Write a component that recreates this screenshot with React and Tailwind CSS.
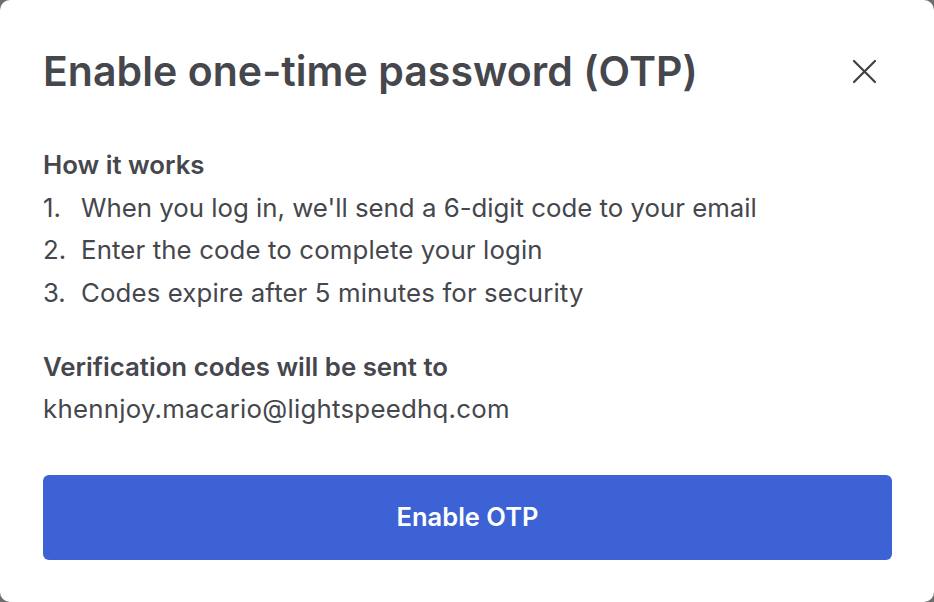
export default function App() {
  return (
    <div className="w-[934px] h-[602px] bg-[#6e6e6e] overflow-hidden" style={{ fontFamily: 'Inter, "Noto Sans", sans-serif' }}>
      <div className="w-full h-full bg-white rounded-[10px] pl-[43px] pr-[42px] text-[#45474d] flex flex-col">
        <div className="flex items-center justify-between h-[60px] mt-[41px]">
          <h1 className="text-[41px] font-semibold tracking-[0.05px] leading-none">Enable one-time password (OTP)</h1>
          <button className="w-[40px] h-[40px] flex items-center justify-center mr-[8px]">
            <svg width="25" height="25" viewBox="0 0 25 25" fill="none" stroke="#3f4147" strokeWidth="2.2" strokeLinecap="round">
              <path d="M2 2L23 23M23 2L2 23" />
            </svg>
          </button>
        </div>
        <div className="mt-[43px] text-[25.8px] leading-[42.5px]">
          <div className="font-semibold">How it works</div>
          <ol>
            <li className="flex"><span className="w-[38px]">1.</span><span>When you log in, we'll send a 6-digit code to your email</span></li>
            <li className="flex"><span className="w-[38px]">2.</span><span className="tracking-[0.12px]">Enter the code to complete your login</span></li>
            <li className="flex"><span className="w-[38px]">3.</span><span className="tracking-[0.12px]">Codes expire after 5 minutes for security</span></li>
          </ol>
        </div>
        <div className="mt-[32px] text-[25.8px] leading-[42px]">
          <div className="font-semibold">Verification codes will be sent to</div>
          <div className="tracking-[0.25px]">khennjoy.macario@lightspeedhq.com</div>
        </div>
        <button className="mt-[45px] h-[85px] w-[849px] bg-[#3c62d6] rounded-[6px] text-white text-[25.5px] font-semibold">Enable OTP</button>
      </div>
    </div>
  );
}
